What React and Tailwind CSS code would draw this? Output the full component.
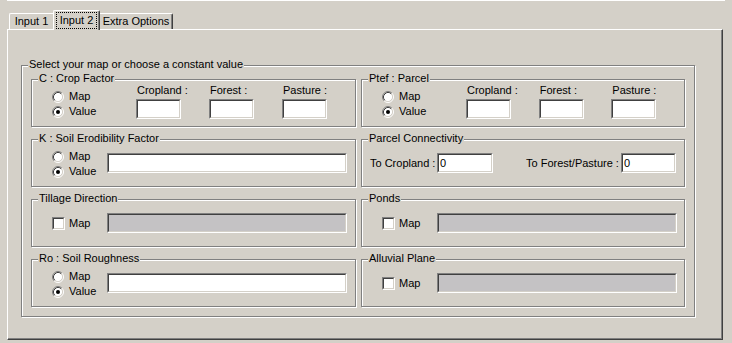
import React from 'react';

// Win98-style dialog page: "Input 2" tab of a map/constant value form

function Sunken({ className = '', disabled = false, children }) {
  return (
    <div className={`border border-t-[#808080] border-l-[#808080] border-b-white border-r-white ${className}`}>
      <div
        className={`h-full w-full border border-t-[#404040] border-l-[#404040] border-b-[#d4d0c8] border-r-[#d4d0c8] pl-px leading-[16px] ${
          disabled ? 'bg-[#c4c2c4]' : 'bg-white'
        }`}
      >
        {children}
      </div>
    </div>
  );
}

function Radio({ checked }) {
  return (
    <svg width="12" height="12" viewBox="0 0 12 12" className="shrink-0">
      <circle cx="6" cy="6" r="4.5" fill="white" />
      <path d="M2.11 9.89 A5.5 5.5 0 0 1 9.89 2.11" fill="none" stroke="#808080" />
      <path d="M9.89 2.11 A5.5 5.5 0 0 1 2.11 9.89" fill="none" stroke="#ffffff" />
      <path d="M2.82 9.18 A4.5 4.5 0 0 1 9.18 2.82" fill="none" stroke="#404040" />
      <path d="M9.18 2.82 A4.5 4.5 0 0 1 2.82 9.18" fill="none" stroke="#d4d0c8" />
      {checked && <circle cx="6" cy="6" r="2" fill="black" />}
    </svg>
  );
}

function Group({ label, className = '', children }) {
  return (
    <div className={`relative border border-[#808080] shadow-[1px_1px_0_#ffffff,inset_1px_1px_0_#ffffff] ${className}`}>
      <span className="absolute -top-[8px] left-[6px] bg-[#d4d0c8] px-px leading-[13px] whitespace-nowrap">
        {label}
      </span>
      {children}
    </div>
  );
}

function MapValue({ value = true, width = 'w-[84px]' }) {
  return (
    <div className={`flex flex-col ${width}`}>
      <div className="flex h-[15px] items-center gap-[5px]">
        <Radio checked={!value} />
        <span>Map</span>
      </div>
      <div className="flex h-[15px] items-center gap-[5px]">
        <Radio checked={value} />
        <span>Value</span>
      </div>
    </div>
  );
}

function Landuse({ label }) {
  return (
    <div className="flex w-[82px] flex-col pt-[3px]">
      <div className="h-[14px] pl-px leading-[14px]">{label}</div>
      <Sunken className="mt-[2px] h-[20px] w-[45px]" />
    </div>
  );
}

function CropRow({ title }) {
  return (
    <Group label={title} className="h-[48px]">
      <div className="flex pl-[20px]">
        <div className="pt-[9px]">
          <MapValue />
        </div>
        <Landuse label="Cropland :" />
        <Landuse label="Forest :" />
        <Landuse label="Pasture :" />
      </div>
    </Group>
  );
}

function ValueRow({ title }) {
  return (
    <Group label={title} className="h-[48px]">
      <div className="flex pl-[20px]">
        <div className="pt-[9px]">
          <MapValue width="w-[55px]" />
        </div>
        <Sunken className="mt-[13px] h-[20px] w-[240px]" />
      </div>
    </Group>
  );
}

function MapRow({ title }) {
  return (
    <Group label={title} className="h-[48px]">
      <div className="flex h-[20px] items-center pl-[20px] mt-[13px]">
        <div className="flex w-[55px] items-center gap-[4px]">
          <Sunken className="h-[13px] w-[13px]" />
          <span>Map</span>
        </div>
        <Sunken disabled className="h-[20px] w-[240px]" />
      </div>
    </Group>
  );
}

function Connectivity() {
  return (
    <Group label="Parcel Connectivity" className="h-[48px]">
      <div className="mt-[13px] flex h-[20px] items-center pl-[8px]">
        <span className="w-[67px] whitespace-nowrap">To Cropland :</span>
        <Sunken className="h-[20px] w-[56px]">0</Sunken>
        <span className="ml-[33px] w-[95px] whitespace-nowrap">To Forest/Pasture :</span>
        <Sunken className="h-[20px] w-[55px]">0</Sunken>
      </div>
    </Group>
  );
}

export default function App() {
  return (
    <div className="h-[343px] w-[732px] overflow-hidden bg-[#d4d0c8] pl-[7px] font-['Liberation_Sans',Arial,sans-serif] text-[11px] leading-[13px] text-black">
      <div className="w-[718px] border-t border-white">
        {/* tabs */}
        <div className="flex h-[28px] items-end pl-[2px]">
          <div className="flex h-[16px] w-[44px] items-center justify-center rounded-tl-[2px] border-l border-t border-white">
            Input 1
          </div>
          <div className="relative z-10 -mb-px flex h-[20px] w-[47px] items-center justify-center rounded-t-[2px] border-l border-t border-r border-l-white border-t-white border-r-[#404040] bg-[#d4d0c8] pb-px shadow-[inset_-1px_0_0_#808080]">
            <span className="border border-dotted border-black px-[3px] leading-[15px]">Input 2</span>
          </div>
          <div className="flex h-[16px] w-[73px] items-center justify-center rounded-tr-[2px] border-t border-r border-t-white border-r-[#404040] shadow-[inset_-1px_0_0_#808080]">
            Extra Options
          </div>
        </div>

        {/* tab panel */}
        <div className="h-[311px] w-[716px] border border-t-white border-l-white border-r-[#404040] border-b-[#404040] pl-[13px] pt-[35px] shadow-[inset_-1px_-1px_0_#808080]">
          <Group label="Select your map or choose a constant value" className="h-[252px] w-[674px]">
            <div className="grid grid-cols-[325px_324px] gap-x-[5px] gap-y-[12px] pl-[9px] pt-[13px]">
              <CropRow title="C : Crop Factor" />
              <CropRow title="Ptef : Parcel" />
              <ValueRow title="K : Soil Erodibility Factor" />
              <Connectivity />
              <MapRow title="Tillage Direction" />
              <MapRow title="Ponds" />
              <ValueRow title="Ro : Soil Roughness" />
              <MapRow title="Alluvial Plane" />
            </div>
          </Group>
        </div>
      </div>
    </div>
  );
}
